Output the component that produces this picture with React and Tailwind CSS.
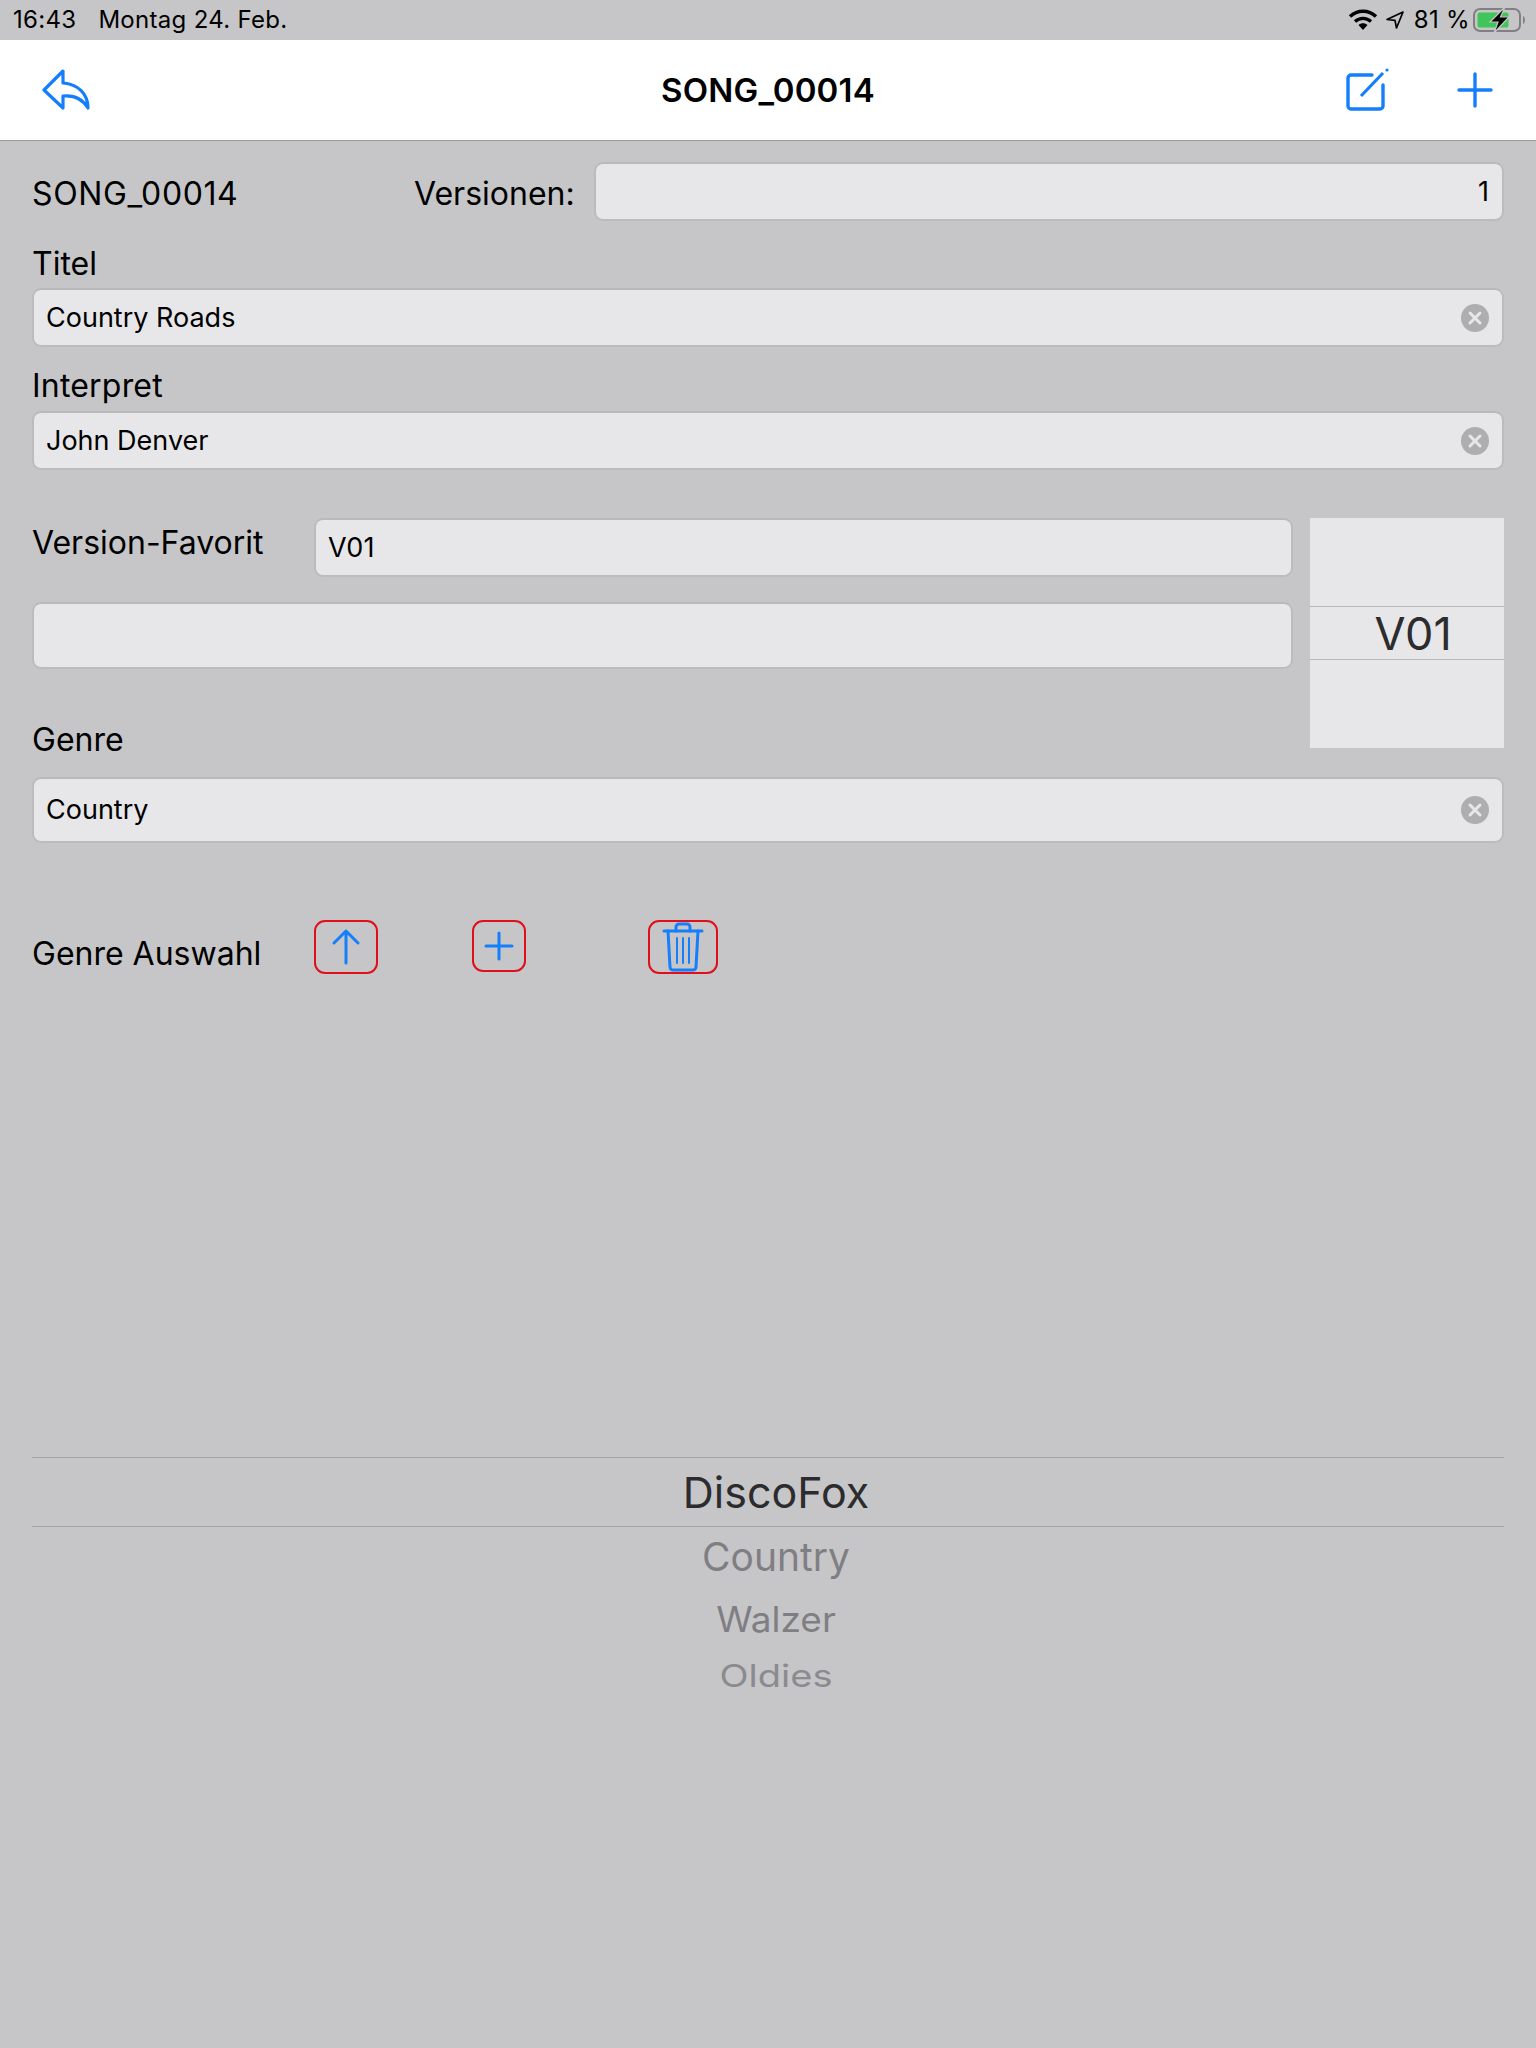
import React from 'react'

const font = "font-['Inter','Liberation_Sans',sans-serif]"

function ClearIcon() {
    return (
        <svg width="28" height="28" viewBox="0 0 28 28" className="shrink-0">
            <circle cx="14" cy="14" r="14" fill="#aeaeb0" />
            <path d="M9 9l10 10M19 9L9 19" stroke="#e7e7e9" strokeWidth="3" strokeLinecap="round" />
        </svg>
    )
}

function Field({ value, clear, right, className = '' }) {
    return (
        <div className={`flex items-center rounded-[9px] border-2 border-[#bcbcbe] border-t-[#b9b9bb] bg-[#e7e7e9] pl-[12px] pr-[13px] text-[27px] text-black ${right ? 'justify-end' : 'justify-between'} ${className}`}>
            <span className="pt-[1px]">{value}</span>
            {clear && <ClearIcon />}
        </div>
    )
}

function RedButton({ className = '', children }) {
    return (
        <div className={`flex items-center justify-center rounded-[11px] border-2 border-[#e0101a] ${className}`}>
            {children}
        </div>
    )
}

export default function App() {
    return (
        <div className={`flex h-[2048px] w-[1536px] flex-col overflow-hidden bg-[#c6c6c8] ${font}`}>
            {/* status bar */}
            <div className="flex h-10 items-center justify-between pl-[13px] pr-[9px] text-[24px] tracking-[0.3px] text-black">
                <div className="flex gap-[22px]">
                    <span>16:43</span>
                    <span>Montag 24. Feb.</span>
                </div>
                <div className="flex items-center">
                    <svg width="30" height="24" viewBox="0 0 30 24" className="mr-[7px]">
                        <path d="M2 8.5C9.5 1.5 20.5 1.5 28 8.5" fill="none" stroke="#000" strokeWidth="3.4" />
                        <path d="M7 13.5C11.8 9.3 18.2 9.3 23 13.5" fill="none" stroke="#000" strokeWidth="3.4" />
                        <path d="M15 22l-4.500-5C13 14.800 17 14.800 19.500 17z" fill="#000" />
                    </svg>
                    <svg width="20" height="20" viewBox="0 0 20 20" className="mr-[9px]">
                        <path d="M18 2L2 9.500l8 .8 1.500 7.700z" fill="none" stroke="#000" strokeWidth="1.700" strokeLinejoin="round" />
                    </svg>
                    <span className="mr-[3px]">81 %</span>
                    <svg width="54" height="28" viewBox="0 0 54 28">
                        <rect x="1" y="3" width="46" height="22" rx="6" fill="none" stroke="#808082" strokeWidth="2" />
                        <rect x="4.500" y="6.500" width="31" height="15" rx="2" fill="#3fc55a" />
                        <path d="M50 10c2.500 .5 2.500 7.500 0 8z" fill="#808082" />
                        <path d="M32 1L17 16h8l-4 11 15-16h-8.500z" fill="#000" stroke="#c6c6c8" strokeWidth="1.200" />
                    </svg>
                </div>
            </div>

            {/* nav bar */}
            <div className="relative flex h-[101px] shrink-0 items-center justify-between border-b border-b-[#9a9a9c] bg-white pl-[42px] pr-[43px]">
                <svg width="48" height="42" viewBox="0 0 48 42" fill="none" stroke="#157efb" strokeWidth="3.200" strokeLinejoin="round" strokeLinecap="round">
                    <path d="M21 2L2 21l19 18V27c10-1 19 2 25 12 0-14-10-24-25-25z" />
                </svg>
                <span className="absolute left-0 right-0 pt-[1px] text-center text-[33px] font-semibold tracking-[0.2px] text-black">SONG_00014</span>
                <div className="flex items-center gap-[68px]">
                    <svg width="44" height="44" viewBox="0 0 44 44" fill="none" stroke="#157efb">
                        <path d="M27 7H6a3 3 0 0 0-3 3v28a3 3 0 0 0 3 3h29a3 3 0 0 0 3-3V17" strokeWidth="3.400" strokeLinecap="round" />
                        <path d="M16 28L38 5" strokeWidth="3.200" />
                        <circle cx="42" cy="2" r="1.600" fill="#157efb" stroke="none" />
                    </svg>
                    <svg width="36" height="36" viewBox="0 0 36 36" fill="none" stroke="#157efb" strokeWidth="3.400" strokeLinecap="round">
                        <path d="M18 2v32M2 18h32" />
                    </svg>
                </div>
            </div>

            <div className="flex flex-1 flex-col pl-8 pr-8 text-[32px] text-black">
                {/* id + versions */}
                <div className="mt-[21px] flex h-[59px] items-center">
                    <span className="w-[382px] pt-[5px] tracking-[0.6px]">SONG_00014</span>
                    <span className="w-[180px] pt-[5px]">Versionen:</span>
                    <Field value="1" right className="h-[59px] flex-1" />
                </div>

                <div className="mt-[22px] h-[45px] leading-[42px]">Titel</div>
                <Field value="Country Roads" clear className="h-[59px]" />
                <div className="mt-[16px] h-[48px] leading-[46px] tracking-[0.2px]">Interpret</div>
                <Field value="John Denver" clear className="h-[59px]" />

                {/* version favorit + wheel */}
                <div className="mt-[48px] flex gap-[17px]">
                    <div className="flex w-[1262px] flex-col">
                        <div className="flex h-[59px] items-start">
                            <span className="w-[282px] pt-[1px]">Version-Favorit</span>
                            <Field value="V01" className="h-[59px] flex-1" />
                        </div>
                        <Field value="" className="mt-[25px] h-[67px]" />
                        <div className="mt-[51px] leading-[40px]">Genre</div>
                    </div>
                    <div className="flex h-[230px] w-[194px] flex-col bg-[#e7e7e9]">
                        <div className="h-[88px]" />
                        <div className="flex h-[54px] items-center justify-center border-y border-y-[#b8b8ba] pl-[12px] pt-[1px] text-[45px] text-[#2c2c2e]">V01</div>
                    </div>
                </div>

                <Field value="Country" clear className="mt-[17px] h-[66px]" />

                {/* genre auswahl */}
                <div className="mt-[77px] flex h-[54px] items-start">
                    <span className="w-[282px] pt-[10px]">Genre Auswahl</span>
                    <RedButton className="h-[54px] w-[64px]">
                        <svg width="28" height="36" viewBox="0 0 28 36" fill="none" stroke="#157efb" strokeWidth="3" strokeLinecap="round" strokeLinejoin="round">
                            <path d="M14 34V2M2 14L14 2l12 12" />
                        </svg>
                    </RedButton>
                    <RedButton className="ml-[94px] h-[52px] w-[54px]">
                        <svg width="30" height="30" viewBox="0 0 30 30" fill="none" stroke="#157efb" strokeWidth="3" strokeLinecap="round">
                            <path d="M15 2v26M2 15h26" />
                        </svg>
                    </RedButton>
                    <RedButton className="ml-[122px] h-[54px] w-[70px]">
                        <svg width="42" height="50" viewBox="0 0 42 50" fill="none" stroke="#157efb" strokeWidth="2.400" strokeLinecap="round" strokeLinejoin="round">
                            <path d="M2 9h38" strokeWidth="3" />
                            <path d="M14 9V5a3 3 0 0 1 3-3h8a3 3 0 0 1 3 3v4" strokeWidth="3" />
                            <path d="M6 9l2 36a3 3 0 0 0 3 3h20a3 3 0 0 0 3-3l2-36" strokeWidth="3" />
                            <path d="M15 16v25M21 16v25M27 16v25" strokeWidth="2" />
                        </svg>
                    </RedButton>
                </div>

                {/* genre picker */}
                <div className="mt-[483px] flex flex-col items-center">
                    <div className="flex h-[70px] w-full items-center justify-center border-y border-y-[#a3a3a5] pl-[16px] text-[43px] text-[#2c2c2e]">DiscoFox</div>
                    <div className="ml-[16px] mt-[10px] h-[40px] text-[39px] leading-[40px] text-[#7f7f83]">Country</div>
                    <div className="ml-[16px] mt-[23px] h-[40px] scale-y-95 text-[37px] leading-[40px] text-[#7f7f83]">Walzer</div>
                    <div className="ml-[16px] mt-[16px] h-[40px] scale-y-[0.82] text-[38px] leading-[40px] text-[#8b8b8f]">Oldies</div>
                </div>
            </div>
        </div>
    )
}
